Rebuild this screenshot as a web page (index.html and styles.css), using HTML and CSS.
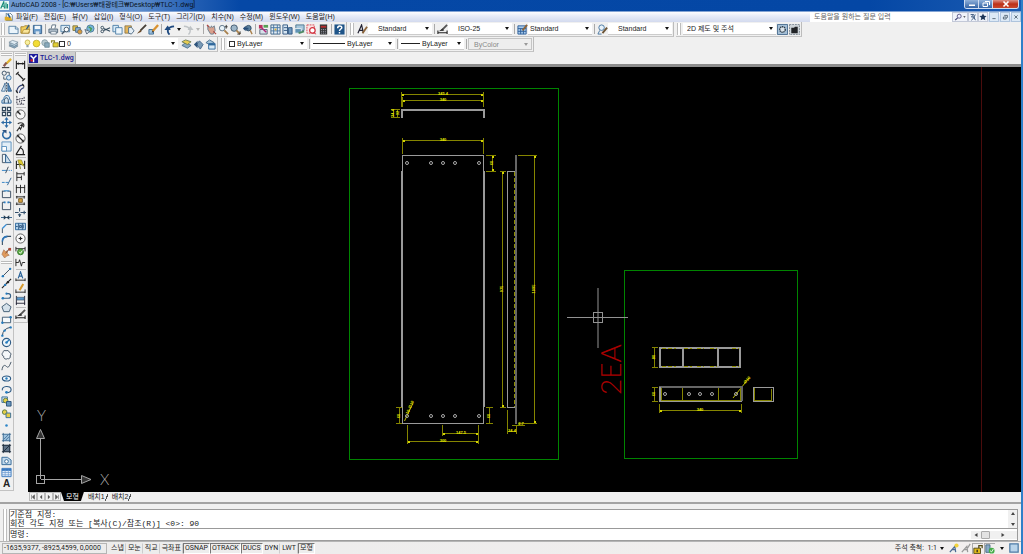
FILE: index.html
```html
<!DOCTYPE html>
<html lang="ko">
<head>
<meta charset="utf-8">
<title>AutoCAD 2008 - TLC-1.dwg</title>
<link rel="stylesheet" href="styles.css">
</head>
<body>
<svg class="defs" aria-hidden="true">
<symbol id="new" viewBox="0 0 12 12"><path d="M1 2.500h7.500l2.500 2.500v5.500h-10z" fill="#eaf4fb" stroke="#5580a4"/><path d="M8 2.500v3h3" fill="none" stroke="#5580a4"/></symbol>
<symbol id="open" viewBox="0 0 12 12"><path d="M1 3h3l1-1h5v8H1z" fill="#f2cf5c" stroke="#a08030"/><path d="M5 9l5-8" stroke="#345f86" stroke-width="1.500"/><path d="M2 10l2-4h7l-2 4z" fill="#f9e59a" stroke="#a08030" stroke-width=".7"/></symbol>
<symbol id="save" viewBox="0 0 12 12"><path d="M1.500 1.500h9v9h-9z" fill="#6a9bca" stroke="#37618c"/><path d="M3 2h6v3.500H3z" fill="#f2f7fb"/><path d="M4 8h4v3H4z" fill="#d8e4ee"/></symbol>
<symbol id="print" viewBox="0 0 12 12"><path d="M3.500 5l1-4h4l-1 4" fill="#fff" stroke="#5c6f80"/><path d="M1 5.500h9.500v4H1z" fill="#b4c2ce" stroke="#526678"/><path d="M3 8h6v3H3z" fill="#e9eef2" stroke="#526678" stroke-width=".7"/></symbol>
<symbol id="preview" viewBox="0 0 12 12"><path d="M1 1.500h9.500v7H1z" fill="#dcebf5" stroke="#4e7da5"/><circle cx="7" cy="6" r="2.500" fill="#fff" stroke="#456" /><path d="M5 8l-3 3" stroke="#456" stroke-width="1.500"/></symbol>
<symbol id="publish" viewBox="0 0 12 12"><path d="M1 2h5v5H1z" fill="#e5c04d" stroke="#7c7440"/><path d="M4 4h5v5H4z" fill="#8fb6d6" stroke="#3e658c"/><circle cx="8.500" cy="8.500" r="2.500" fill="#d89b3c" stroke="#506070" stroke-width=".7"/></symbol>
<symbol id="dwf" viewBox="0 0 12 12"><circle cx="7" cy="5" r="4" fill="#77b6d8" stroke="#3d6b8c" stroke-width=".8"/><path d="M5 3l3 2-1 3" stroke="#4a9a50" stroke-width="1.500" fill="none"/><path d="M1 6l5 2-3 3z" fill="#d9e4ec" stroke="#567"/></symbol>
<symbol id="cut" viewBox="0 0 12 12"><path d="M11 4L4 7M11 8L4 5" stroke="#334a5c" stroke-width="1.200"/><circle cx="2.500" cy="4" r="1.500" fill="none" stroke="#334a5c"/><circle cx="2.500" cy="8" r="1.500" fill="none" stroke="#334a5c"/></symbol>
<symbol id="copy" viewBox="0 0 12 12"><path d="M1 1.500h6v7H1z" fill="#d9ebf7" stroke="#4f80a8"/><path d="M4 4h7v7H4z" fill="#edf6fc" stroke="#4f80a8"/></symbol>
<symbol id="paste" viewBox="0 0 12 12"><path d="M1 2h7v8H1z" fill="#e3b55b" stroke="#7e6a3c" stroke-width=".8"/><path d="M5 4l3-.5 3 4-3 3.500-3-1z" fill="#e5eef5" stroke="#52708a"/></symbol>
<symbol id="match" viewBox="0 0 12 12"><path d="M11 1L5 7" stroke="#474039" stroke-width="2"/><path d="M5 6L1 10.500l5-2z" fill="#6b4d2d"/></symbol>
<symbol id="bedit" viewBox="0 0 12 12"><path d="M1 6h5v5H1z" fill="#9cc1de" stroke="#3e6b94"/><path d="M11 1L5 8" stroke="#d89130" stroke-width="2.500"/><path d="M5 7l-1 2.500 2.500-1z" fill="#333"/></symbol>
<symbol id="undo" viewBox="0 0 12 12"><path d="M6 11.500C2.500 8 4 3 11 2.500" fill="none" stroke="#1f4a80" stroke-width="2"/><path d="M.5 6.500L4 1.500l3.500 5z" fill="#1f4a80"/></symbol>
<symbol id="redo" viewBox="0 0 12 12"><path d="M6 11.500C9.500 8 8 3 1 2.500" fill="none" stroke="#bfc3c6" stroke-width="1.500"/><path d="M11.500 6.500L8 2 5 6.500z" fill="#bfc3c6"/></symbol>
<symbol id="pan" viewBox="0 0 12 12"><path d="M2 2l3 2 1-2 1 2 2-2 1 5-2 4H5L2 6z" fill="#d8a08c" stroke="#6c7f8e"/><path d="M8 8l3 3M1 1l2 2" stroke="#b4433c" stroke-width="1.200"/></symbol>
<symbol id="zoom" viewBox="0 0 12 12"><circle cx="4.500" cy="4.500" r="3" fill="#e8f2f8" stroke="#5b7286"/><path d="M7 7l4 4" stroke="#a8804c" stroke-width="2"/><path d="M9 1v4M7.500 3h3" stroke="#333"/></symbol>
<symbol id="zoomw" viewBox="0 0 12 12"><circle cx="4.500" cy="4.500" r="3.500" fill="#9db6c8" stroke="#41586c"/><path d="M7 7l4 4" stroke="#a8804c" stroke-width="2"/><path d="M8 11h3V8" stroke="#333" fill="none"/></symbol>
<symbol id="zoomp" viewBox="0 0 12 12"><circle cx="7" cy="4.500" r="3" fill="#5d82a0" stroke="#2f4c66"/><path d="M9 7l2 4" stroke="#a8804c" stroke-width="1.500"/><path d="M1 5l3-3v2h3v2H4v2z" fill="#274d78"/></symbol>
<symbol id="props" viewBox="0 0 12 12"><path d="M1 1h4v4H1z" fill="#b8345e"/><path d="M6 1h5v3H6z" fill="#56a055"/><path d="M2 6h8v5H2z" fill="#d7e1ea" stroke="#567"/><path d="M4 4l5 5" stroke="#b02878" stroke-width="1.600"/></symbol>
<symbol id="dc" viewBox="0 0 12 12"><path d="M1 1h10v10H1z" fill="#e4edf5" stroke="#3d6082"/><path d="M1 4h10M1 7.500h10M4 1v10M8 1v10" stroke="#4775a0"/><path d="M5 5h2v2H5z" fill="#d2ac3b"/></symbol>
<symbol id="tp" viewBox="0 0 12 12"><path d="M1 1h5v10H1z" fill="#d7e6f2" stroke="#2f5580"/><path d="M2 4h4M2 7h4" stroke="#2f5580"/><path d="M7 4h4v7H7z" fill="#6d98bf" stroke="#2f5580"/></symbol>
<symbol id="sheet" viewBox="0 0 12 12"><path d="M2 1h9v6H2z" fill="#a9c8dc" stroke="#4d7792"/><path d="M1 5h7v5H1z" fill="#5f93b3" stroke="#e7eef3"/><path d="M5 10l6-2" stroke="#4f8a63" stroke-width="2"/></symbol>
<symbol id="markup" viewBox="0 0 12 12"><path d="M1 1h8v9H1z" fill="#fbe4e4" stroke="#d64550" stroke-dasharray="2 1"/><circle cx="7" cy="7" r="3" fill="#fff" stroke="#d22f3c" stroke-width="1.300"/><path d="M9 10l2 1" stroke="#d22f3c"/></symbol>
<symbol id="calc" viewBox="0 0 12 12"><path d="M2 .5h8v11H2z" fill="#363839"/><path d="M3 2h6v2H3z" fill="#b62a2d"/><path d="M3.500 6h5M3.500 8h5M3.500 10h5" stroke="#aab" stroke-dasharray="1 1"/></symbol>
<symbol id="help" viewBox="0 0 12 12"><path d="M.5.500h11v11H.5z" fill="#1e5488"/><path d="M4 4.500c0-3 4.500-3 4.500-.5C8.500 5.500 6 5.500 6 7.500M6 8.800v1.500" fill="none" stroke="#fff" stroke-width="1.600"/></symbol>
<symbol id="tstyle" viewBox="0 0 12 12"><path d="M1 10L5 1l2 9M2 7h5" fill="none" stroke="#223" stroke-width="1.300"/><path d="M11 3L6 10" stroke="#8c643a" stroke-width="2"/></symbol>
<symbol id="dstyle" viewBox="0 0 12 12"><path d="M1 7v4M11 7v4M1 9.500h10" stroke="#222" stroke-width="1.200"/><path d="M11 1L5 7" stroke="#555" stroke-width="2"/><path d="M6 5l-4 3 6-1z" fill="#333"/></symbol>
<symbol id="tblstyle" viewBox="0 0 12 12"><path d="M1 2h9v9H1z" fill="#a6c9ea" stroke="#2d5e9a"/><path d="M1 5h9M1 8h9M4 5v6M7 5v6" stroke="#2d5e9a"/><path d="M11 1L6 7" stroke="#8c643a" stroke-width="2"/></symbol>
<symbol id="mstyle" viewBox="0 0 12 12"><circle cx="5" cy="4" r="3" fill="#e8f2fa" stroke="#4474a0"/><path d="M3 7l-2 4h4" fill="none" stroke="#4474a0"/><path d="M11 4L6 10" stroke="#6b5334" stroke-width="2"/></symbol>
<symbol id="gear" viewBox="0 0 12 12"><path d="M.5.500h11v11H.5z" fill="#a4bfd6" stroke="#456a8c"/><circle cx="6" cy="6" r="3" fill="#dbe4ea" stroke="#2c3a48" stroke-width="1.500" stroke-dasharray="1.500 .7"/></symbol>
<symbol id="wsq" viewBox="0 0 12 12"><path d="M.5.500h11v11H.5z" fill="#ccd3d8" stroke="#7b8790" stroke-dasharray="2 1"/><path d="M2.500 4h3l1-1h3v7h-7z" fill="#202326"/></symbol>
<symbol id="layers" viewBox="0 0 12 12"><path d="M1 7.500l4-2 6 2-4 2.500z" fill="#8ca9be" stroke="#557085" stroke-width=".6"/><path d="M1 5.500l4-2 6 2-4 2.500z" fill="#bad0df" stroke="#557085" stroke-width=".6"/><path d="M1 3.500l4-2 6 2-4 2.500z" fill="#dfebf3" stroke="#557085" stroke-width=".6"/></symbol>
<symbol id="bulb" viewBox="0 0 12 12"><circle cx="6" cy="4.500" r="3.200" fill="#f8f0a0" stroke="#c3a93a"/><path d="M4.500 8h3v3h-3z" fill="#8ea0ac"/></symbol>
<symbol id="sun" viewBox="0 0 12 12"><circle cx="6" cy="6" r="4.500" fill="#f2dd35" stroke="#bda827"/></symbol>
<symbol id="vp" viewBox="0 0 12 12"><circle cx="5" cy="5" r="4" fill="#b9cad0" stroke="#7b949e"/><path d="M5 5h6v6H5z" fill="#8aabbd" stroke="#60808f"/></symbol>
<symbol id="lock" viewBox="0 0 12 12"><path d="M2 5V2.500h4V5" fill="none" stroke="#918928" stroke-width="1.500"/><path d="M4 5h7v5.500H4z" fill="#e4cf33" stroke="#827822"/></symbol>
<symbol id="lcur" viewBox="0 0 12 12"><path d="M1 7l4-3 6 3-4 3z" fill="#87a8c1" stroke="#4a708e"/><path d="M1 3l4-2 6 2-4 3z" fill="#e7cc52" stroke="#718058"/></symbol>
<symbol id="lprev" viewBox="0 0 12 12"><path d="M4 6l3-4 4 4-3 5z" fill="#7899b5" stroke="#45678a"/><path d="M1 6l4-4v8z" fill="#2d537c"/></symbol>
<symbol id="lstate" viewBox="0 0 12 12"><path d="M1 4l4-3 5 3-5 2z" fill="#9fc0d8" stroke="#4a708e"/><path d="M4 5h7v6H4z" fill="#d7e9f6" stroke="#2f689c"/><path d="M4 6h7" stroke="#2f689c" stroke-width="2"/></symbol>
<symbol id="erase" viewBox="0 0 12 12"><path d="M11 1L6 6" stroke="#e0b434" stroke-width="2.500"/><path d="M6 5L3 9" stroke="#8a5a50" stroke-width="2.500"/><path d="M1 10.500h8" stroke="#222"/></symbol>
<symbol id="cobj" viewBox="0 0 12 12"><circle cx="3.500" cy="3.500" r="2.300" fill="none" stroke="#344b62"/><circle cx="8.500" cy="8.500" r="2.500" fill="#d3e5f3" stroke="#2e6ca3"/><path d="M6 2.500h3v3M3 7v3h3" fill="none" stroke="#456"/></symbol>
<symbol id="mirror" viewBox="0 0 12 12"><path d="M4.500 1v9H.5z" fill="#dcebf5" stroke="#477096"/><path d="M7.500 1v9h4z" fill="#5b8dbb" stroke="#2f5f8c"/><path d="M6 0v12" stroke="#456" stroke-dasharray="2 1"/></symbol>
<symbol id="offset" viewBox="0 0 12 12"><path d="M1 10V7l2-1C3 0 10 0 9.500 6l1.500 1v3z" fill="#d6e6f2" stroke="#2d689e"/><path d="M3.500 10V7.500C4 3 8 3 8 7.500V10" fill="none" stroke="#223b55"/></symbol>
<symbol id="array" viewBox="0 0 12 12"><path d="M1.500 1.500h3.500v3.500H1.500zM7 1.500h3.500v3.500H7zM1.500 7h3.500v3.500H1.500zM7 7h3.500v3.500H7z" fill="#e7edf2" stroke="#32475a" stroke-width="1.200"/></symbol>
<symbol id="move" viewBox="0 0 12 12"><path d="M6 1v10M1 6h10" stroke="#2d6ba5" stroke-width="1.300"/><path d="M6 0l2.200 3H3.800zM6 12l2.200-3H3.800zM0 6l3-2.200v4.400zM12 6L9 3.800v4.400z" fill="#2d6ba5"/></symbol>
<symbol id="rotate" viewBox="0 0 12 12"><path d="M4 2.500A4.300 4.300 0 1 0 9 3" fill="none" stroke="#2d6ba5" stroke-width="1.700"/><path d="M1 1h5v4z" fill="#2d5280"/></symbol>
<symbol id="scale" viewBox="0 0 12 12"><path d="M1 1h10v10H1z" fill="#e2eef7" stroke="#5a8fbd"/><path d="M1 6h5v5H1z" fill="#fff" stroke="#5a8fbd"/></symbol>
<symbol id="stretch" viewBox="0 0 12 12"><path d="M1.500 1.500H5v9H1.500z" fill="#edf3f7" stroke="#456"/><path d="M5 1.500l6 9H5z" fill="#cfe0ee" stroke="#2d5e8c"/></symbol>
<symbol id="trim" viewBox="0 0 12 12"><path d="M1 7h5" stroke="#2d7fc4"/><path d="M7 7h5" stroke="#2d7fc4" stroke-dasharray="1 1"/><path d="M8 3L5 10" stroke="#345"/></symbol>
<symbol id="extend" viewBox="0 0 12 12"><path d="M1 7h3M5 7h3" stroke="#2d7fc4"/><path d="M11 2L7 10" stroke="#2d5f8f"/></symbol>
<symbol id="breakp" viewBox="0 0 12 12"><path d="M1.500 3.500H5M7 3.500h3.500v7h-9V3" fill="none" stroke="#33475c"/><path d="M3 3h6" stroke="#5d9dce" stroke-width="1.500"/></symbol>
<symbol id="break" viewBox="0 0 12 12"><path d="M4 2.500H1.500v8h9v-8H8" fill="none" stroke="#33475c"/><path d="M3 2.500h2M7 2.500h2" stroke="#2d7fc4" stroke-width="2"/></symbol>
<symbol id="join" viewBox="0 0 12 12"><path d="M0 6h12" stroke="#2e5d88"/><path d="M3 3.500L6 6 3 8.500zM9 3.500L6 6l3 2.500z" fill="#253c52"/></symbol>
<symbol id="chamfer" viewBox="0 0 12 12"><path d="M1.500 11V6l4.500-4.500h5" fill="none" stroke="#3b5064"/><path d="M1.500 6L6 1.500" stroke="#3c93da" stroke-width="1.500"/></symbol>
<symbol id="fillet" viewBox="0 0 12 12"><path d="M1.500 11V7Q1.500 2 7 1.500h4" fill="none" stroke="#3b5064" stroke-width="1.200"/><path d="M1.500 7Q1.500 2 7 1.500" fill="none" stroke="#2d75b7" stroke-width="1.700"/></symbol>
<symbol id="explode" viewBox="0 0 12 12"><path d="M1 8l2-5 2 2 2-1v3l2 2-3 1-2 2z" fill="#e09a5c" stroke="#9a6a50" stroke-width=".6"/><path d="M8 1h3v3H8z" fill="#b54a3a"/><path d="M5 7l4-5" stroke="#7a4a34"/></symbol>
<symbol id="line" viewBox="0 0 12 12"><path d="M2 10l8-8" stroke="#345"/><circle cx="2" cy="10" r="1.300" fill="#257bbd"/><circle cx="10" cy="2" r="1.300" fill="#257bbd"/></symbol>
<symbol id="xline" viewBox="0 0 12 12"><path d="M1 11L11 1" stroke="#222" stroke-width="1.200"/><circle cx="4.500" cy="7.500" r="1.300" fill="#257bbd"/><circle cx="7.500" cy="4.500" r="1.300" fill="#222"/></symbol>
<symbol id="pline" viewBox="0 0 12 12"><path d="M1 9h7a2.500 2.500 0 0 0 0-5H6" fill="none" stroke="#345f85" stroke-width="1.200"/><circle cx="2" cy="9" r="1.400" fill="#257bbd"/><circle cx="6" cy="4" r="1.200" fill="#257bbd"/></symbol>
<symbol id="polygon" viewBox="0 0 12 12"><path d="M6 1.500l5 3.700-2 5.300H3L1 5.200z" fill="#d4e1ea" stroke="#3b5870"/></symbol>
<symbol id="rect" viewBox="0 0 12 12"><path d="M1.500 3.500h9v6h-9z" fill="#f5f9fc" stroke="#3b5870"/><circle cx="1.500" cy="9.500" r="1.300" fill="#257bbd"/><circle cx="10.500" cy="3.500" r="1.300" fill="#257bbd"/></symbol>
<symbol id="arc" viewBox="0 0 12 12"><path d="M1.500 10.500Q2 3 10 1.500" fill="none" stroke="#345"/><circle cx="1.500" cy="10.500" r="1.300" fill="#257bbd"/><circle cx="4" cy="5" r="1.300" fill="#257bbd"/><circle cx="10.500" cy="1.500" r="1.300" fill="#257bbd"/></symbol>
<symbol id="circle" viewBox="0 0 12 12"><circle cx="6" cy="6" r="4.500" fill="#edf5fa" stroke="#2e5b85" stroke-width="1.200"/><path d="M6 6l3-3" stroke="#257bbd" stroke-width="1.300"/><circle cx="6" cy="6" r="1.400" fill="#257bbd"/></symbol>
<symbol id="cloud" viewBox="0 0 12 12"><path d="M3 8a2.300 2.300 0 0 1-1-4 2.300 2.300 0 0 1 3.500-2 2.300 2.300 0 0 1 3.500 1.500 2.300 2.300 0 0 1 1 4 2.300 2.300 0 0 1-3 3A2.500 2.500 0 0 1 3 8z" fill="#f5f8fa" stroke="#3c4f60"/></symbol>
<symbol id="spline" viewBox="0 0 12 12"><path d="M1 10c1-6 3-6 5-4s3 0 5-5" fill="none" stroke="#3c4f60"/></symbol>
<symbol id="ellipse" viewBox="0 0 12 12"><ellipse cx="6" cy="6" rx="4.500" ry="2.800" fill="#edf5fa" stroke="#2e5b85" stroke-width="1.200"/><circle cx="6" cy="6" r="1.300" fill="#257bbd"/></symbol>
<symbol id="earc" viewBox="0 0 12 12"><path d="M1.500 7C0 2 11 1 11 6c0 2-2 3.500-5 3.500" fill="none" stroke="#2e5b85" stroke-width="1.200"/><circle cx="6" cy="9" r="1.500" fill="#257bbd"/></symbol>
<symbol id="insert" viewBox="0 0 12 12"><path d="M1 1h6v6H1z" fill="#cfe0ec" stroke="#356b98"/><circle cx="5" cy="5" r="2.500" fill="#e5cf47" stroke="#5f7a44"/><path d="M6 6h5v5H6z" fill="#6695bd" stroke="#284f74"/></symbol>
<symbol id="block" viewBox="0 0 12 12"><circle cx="4" cy="4.500" r="2.500" fill="#e5cf47" stroke="#557a44"/><path d="M5.500 5.500h5v5h-5z" fill="#e5cf47" stroke="#356b98"/></symbol>
<symbol id="point" viewBox="0 0 12 12"><circle cx="6" cy="6" r="1.400" fill="#2d86c9"/></symbol>
<symbol id="hatch" viewBox="0 0 12 12"><path d="M2 2h8v8H2z" fill="#9fc4e0"/><path d="M1 2.500h10M1 9.500h10M2.500 1v10M9.500 1v10M3 8l5-5M5 9l4-4" stroke="#315f88" stroke-width=".8"/></symbol>
<symbol id="gradient" viewBox="0 0 12 12"><path d="M2 2h8v8H2z" fill="#5e7287"/><path d="M1 2.500h10M1 9.500h10M2.500 1v10M9.500 1v10M3 9l6-6" stroke="#1f2d3b"/></symbol>
<symbol id="region" viewBox="0 0 12 12"><path d="M1 2.500h6l4 3v5H1z" fill="#c1d9ec" stroke="#316796"/><circle cx="6" cy="7" r="2" fill="#fff" stroke="#316796"/></symbol>
<symbol id="table" viewBox="0 0 12 12"><path d="M1 1.500h10v9H1z" fill="#e3eefa" stroke="#3978c0"/><path d="M1 3h10" stroke="#3978c0" stroke-width="2.500"/><path d="M1 6h10M1 8.500h10M4.500 3v7M8 3v7" stroke="#6e9cd0" stroke-width=".8"/></symbol>
<symbol id="dlin" viewBox="0 0 12 12"><path d="M1.500 2v9M10.500 2v9M2 5h8" stroke="#222" stroke-width="1.200"/><path d="M2 5l2-1.500v3zM10 5L8 3.500v3z" fill="#222"/></symbol>
<symbol id="dali" viewBox="0 0 12 12"><path d="M1 4l3-3M8 11l3-3M3 3l6 6" stroke="#222" stroke-width="1.300"/></symbol>
<symbol id="darc" viewBox="0 0 12 12"><path d="M2 10Q2 3 9 2M5 11Q5 7 10 5" fill="none" stroke="#347" stroke-width="1.200"/><path d="M1 8l2 3M8 1l2 3" stroke="#222" stroke-width="1.300"/></symbol>
<symbol id="dord" viewBox="0 0 12 12"><path d="M2 1v9h9M5 8V4h5V1M2 5h3M7 10V6h4" fill="none" stroke="#334" stroke-dasharray="2 1"/></symbol>
<symbol id="drad" viewBox="0 0 12 12"><circle cx="6" cy="6" r="5" fill="#f8f8f8" stroke="#555"/><path d="M6 6L3 3" stroke="#222" stroke-width="1.300"/><path d="M2 2l3 1-2 2z" fill="#222"/></symbol>
<symbol id="djog" viewBox="0 0 12 12"><path d="M3 3c5-3 8 1 6 4M2 11l3-4 1 2 3-6" fill="none" stroke="#333" stroke-width="1.200"/><path d="M5 5l3-2v3z" fill="#222"/></symbol>
<symbol id="ddia" viewBox="0 0 12 12"><circle cx="6" cy="6" r="5" fill="#f8f8f8" stroke="#555"/><path d="M3 3l6 6" stroke="#222" stroke-width="1.200"/><path d="M2 2l3 1-2 2zM10 10l-3-1 2-2z" fill="#222"/></symbol>
<symbol id="dang" viewBox="0 0 12 12"><path d="M1 10.500h10M1 10.500L7 1M6 3q4 2 3 7" fill="none" stroke="#222" stroke-width="1.200"/></symbol>
<symbol id="qdim" viewBox="0 0 12 12"><path d="M1.500 2v9M10.500 2v9M2 6h8" stroke="#222" stroke-width="1.200"/><path d="M3 1h4l3 7-5-3 1 6z" fill="#dfca2f" stroke="#777126" stroke-width=".6"/></symbol>
<symbol id="dbase" viewBox="0 0 12 12"><path d="M2 1v10M2 3h8M10 1v4M2 7h5M7 5v5" fill="none" stroke="#222"/></symbol>
<symbol id="dcont" viewBox="0 0 12 12"><path d="M1.500 2v9M6 2v9M10.500 2v9M1 5h10" stroke="#222"/></symbol>
<symbol id="dspace" viewBox="0 0 12 12"><path d="M1 2h10M1 10h10M2 1v3M10 1v3M2 8v3M10 8v3" stroke="#222"/><path d="M4 4h4v4H4z" fill="#dca43d" stroke="#775c2a"/></symbol>
<symbol id="dbreak" viewBox="0 0 12 12"><path d="M5 1v4M5 7v4M0 6h4M6 6h6M10 4v4" stroke="#334f6b" stroke-width="1.200"/><path d="M3 8h4l-2 3z" fill="#334f6b"/></symbol>
<symbol id="tol" viewBox="0 0 12 12"><path d="M.5 2.500h11v7H.5z" fill="#afd0ea" stroke="#2c679b"/><path d="M4 2.500v7M8 2.500v7M1 6h2M5 5h2v2H5zM9 4v4" fill="none" stroke="#2c5580"/></symbol>
<symbol id="center" viewBox="0 0 12 12"><circle cx="6" cy="6" r="5" fill="#fafafa" stroke="#555"/><path d="M6 4v4M4 6h4" stroke="#222" stroke-width="1.300"/></symbol>
<symbol id="insp" viewBox="0 0 12 12"><path d="M1 2v5M11 2v5M1 4h10" stroke="#222"/><circle cx="6" cy="7.500" r="3.200" fill="#61ae46" stroke="#2f752a"/><path d="M4.500 7.500L6 9l2-3" fill="none" stroke="#fff"/></symbol>
<symbol id="jogl" viewBox="0 0 12 12"><path d="M1 2v8M1 6h3l1-3 2 7 1-4h3" fill="none" stroke="#222"/></symbol>
<symbol id="dedit" viewBox="0 0 12 12"><path d="M1 8v3M11 8v3M1 10h10" stroke="#222"/><path d="M3.500 8L6 1l2.500 7M4.500 5.500h3" fill="none" stroke="#2c6499" stroke-width="1.300"/></symbol>
<symbol id="dtedit" viewBox="0 0 12 12"><path d="M1 7v4M11 7v4M1 10h10" stroke="#222"/><path d="M9 1L5 8" stroke="#d89b30" stroke-width="2.200"/></symbol>
<symbol id="dupd" viewBox="0 0 12 12"><path d="M1.500 1v10M10.500 1v10M1 9h10" stroke="#223"/><path d="M2 2.500h8v3H2z" fill="#5b9bd0" stroke="#345" stroke-width=".6"/></symbol>
</svg>

<header class="titlebar">
  <svg class="app" viewBox="0 0 12 12" aria-hidden="true"><path d="M0 0h12v12H0z" fill="#e9f7f3"/><path d="M1 10L5 1l1 9M2 7h4M8 2v8M10 4v6" fill="none" stroke="#178b78" stroke-width="1.500"/></svg>
  <h1>AutoCAD 2008 - [C:₩Users₩태광테크₩Desktop₩TLC-1.dwg]</h1>
  <div class="caption">
    <button aria-label="최소화"><svg viewBox="0 0 12 8"><path d="M3 4.500h6v1.500H3z" fill="#fff"/></svg></button>
    <button aria-label="이전 크기로"><svg viewBox="0 0 12 8"><path d="M5 1.500h4.500v3.500M3 3h4.500v3.500H3z" fill="none" stroke="#fff"/></svg></button>
    <button class="close" aria-label="닫기"><svg viewBox="0 0 12 8"><path d="M3.500 1.500l5 5M8.500 1.500l-5 5" stroke="#fff" stroke-width="1.600"/></svg></button>
  </div>
</header>

<nav class="menubar">
  <svg class="doc" viewBox="0 0 12 12" aria-hidden="true"><path d="M3 0h5l3 3v7H3z" fill="#fff" stroke="#467"/><path d="M1 5h8l2 5H1z" fill="#e0ac26"/><path d="M5 1l3 5" stroke="#2a62a0" stroke-width="2"/></svg>
  <div class="menus"><button>파일(F)</button><button>편집(E)</button><button>뷰(V)</button><button>삽입(I)</button><button>형식(O)</button><button>도구(T)</button><button>그리기(D)</button><button>치수(N)</button><button>수정(M)</button><button>윈도우(W)</button><button>도움말(H)</button></div>
  <div class="infocenter">
    <input type="text" aria-label="도움말 검색" placeholder="도움말을 원하는 질문 입력">
    <button class="wide" aria-label="검색"><svg viewBox="0 0 16 10"><circle cx="7" cy="4" r="2.500" fill="#eef" stroke="#447"/><path d="M5 6L2 9" stroke="#447" stroke-width="1.500"/><path d="M12 4h3l-1.500 2z" fill="#333"/></svg></button>
    <button aria-label="통신 센터"><svg viewBox="0 0 10 10"><path d="M2 2h4L3 5h4L3 9M8 2L6 5l2 4" fill="none" stroke="#335078" stroke-width="1.200"/></svg></button>
    <button aria-label="즐겨찾기"><svg viewBox="0 0 10 10"><path d="M5 .500l1.400 3 3.100.3-2.400 2 .8 3.200L5 7.400 2.100 9l.8-3.200-2.400-2 3.100-.3z" fill="#1d3558"/></svg></button>
    <button class="mdi" aria-label="도면 최소화"><svg viewBox="0 0 10 10"><path d="M3 7h4" stroke="#456" /></svg></button>
    <button class="mdi" aria-label="도면 복원"><svg viewBox="0 0 10 10"><path d="M4 3h4v3M3 5h3.500v2.500H3z" fill="none" stroke="#456"/></svg></button>
    <button class="mdi" aria-label="도면 닫기"><svg viewBox="0 0 10 10"><path d="M3 3l4 4M7 3L3 7" stroke="#456"/></svg></button>
  </div>
</nav>

<div class="toolrow">
  <div class="bar" role="toolbar" aria-label="표준">
    <i class="grip"></i>
    <button aria-label="새로 만들기"><svg><use href="#new"/></svg></button><button aria-label="열기"><svg><use href="#open"/></svg></button><button aria-label="저장"><svg><use href="#save"/></svg></button><i class="sep"></i>
    <button aria-label="플롯"><svg><use href="#print"/></svg></button><button aria-label="미리보기"><svg><use href="#preview"/></svg></button><button aria-label="게시"><svg><use href="#publish"/></svg></button><button aria-label="3D DWF"><svg><use href="#dwf"/></svg></button><i class="sep"></i>
    <button aria-label="잘라내기"><svg><use href="#cut"/></svg></button><button aria-label="복사"><svg><use href="#copy"/></svg></button><button aria-label="붙여넣기"><svg><use href="#paste"/></svg></button><button aria-label="특성 일치"><svg><use href="#match"/></svg></button><button aria-label="블록 편집기"><svg><use href="#bedit"/></svg></button><i class="sep"></i>
    <button aria-label="명령 취소"><svg><use href="#undo"/></svg></button><button class="drop" aria-label="취소 목록"></button><button aria-label="명령 복구"><svg><use href="#redo"/></svg></button><button class="drop off" aria-label="복구 목록"></button><i class="sep"></i>
    <button aria-label="초점이동"><svg><use href="#pan"/></svg></button><button aria-label="줌"><svg><use href="#zoom"/></svg></button><button aria-label="줌 윈도우"><svg><use href="#zoomw"/></svg></button><button aria-label="줌 이전"><svg><use href="#zoomp"/></svg></button><i class="sep"></i>
    <button aria-label="특성"><svg><use href="#props"/></svg></button><button aria-label="디자인센터"><svg><use href="#dc"/></svg></button><button aria-label="도구 팔레트"><svg><use href="#tp"/></svg></button><button aria-label="시트 세트"><svg><use href="#sheet"/></svg></button><button aria-label="표식 세트"><svg><use href="#markup"/></svg></button><button aria-label="계산기"><svg><use href="#calc"/></svg></button><i class="sep"></i>
    <button aria-label="도움말"><svg><use href="#help"/></svg></button>
  </div>
  <div class="bar" role="toolbar" aria-label="스타일">
    <i class="grip"></i>
    <button aria-label="문자 스타일"><svg><use href="#tstyle"/></svg></button><span class="combo style in"><select aria-label="문자 스타일 목록"><option>Standard</option></select></span><i class="sep"></i>
    <button aria-label="치수 스타일"><svg><use href="#dstyle"/></svg></button><span class="combo style in"><select aria-label="치수 스타일 목록"><option>ISO-25</option></select></span><i class="sep"></i>
    <button aria-label="테이블 스타일"><svg><use href="#tblstyle"/></svg></button><span class="combo style"><select aria-label="테이블 스타일 목록"><option>Standard</option></select></span><i class="sep"></i>
    <button aria-label="다중 지시선 스타일"><svg><use href="#mstyle"/></svg></button><span class="combo style in"><select aria-label="지시선 스타일 목록"><option>Standard</option></select></span>
  </div>
  <div class="bar" role="toolbar" aria-label="작업공간">
    <i class="grip"></i>
    <span class="combo space"><select aria-label="작업공간 목록"><option>2D 제도 및 주석</option></select></span>
    <button aria-label="작업공간 설정"><svg><use href="#gear"/></svg></button><button aria-label="내 작업공간"><svg><use href="#wsq"/></svg></button>
  </div>
</div>
<div class="toolrow">
  <div class="bar" role="toolbar" aria-label="도면층">
    <i class="grip"></i>
    <button aria-label="도면층 특성"><svg><use href="#layers"/></svg></button>
    <span class="combo layer"><span class="flags"><svg><use href="#bulb"/></svg><svg><use href="#sun"/></svg><svg><use href="#vp"/></svg><svg><use href="#lock"/></svg><i class="swatch"></i></span><select aria-label="도면층 목록"><option>0</option></select></span>
    <button aria-label="현재로 설정"><svg><use href="#lcur"/></svg></button><button aria-label="이전 도면층"><svg><use href="#lprev"/></svg></button><button aria-label="도면층 상태"><svg><use href="#lstate"/></svg></button>
  </div>
  <div class="bar" role="toolbar" aria-label="특성">
    <i class="grip"></i>
    <span class="combo color"><span class="flags"><i class="swatch"></i></span><select aria-label="색상"><option>ByLayer</option></select></span><i class="sep"></i>
    <span class="combo ltype"><span class="flags"><i class="rule long"></i></span><select aria-label="선종류"><option>ByLayer</option></select></span><i class="sep"></i>
    <span class="combo lweight"><span class="flags"><i class="rule"></i></span><select aria-label="선가중치"><option>ByLayer</option></select></span><i class="sep"></i>
    <span class="combo plot"><select aria-label="플롯 스타일" disabled><option>ByColor</option></select></span>
  </div>
</div>

<main class="work">
  <aside class="tools modify" role="toolbar" aria-label="수정 및 그리기">
    <i class="hgrip"></i>
    <button aria-label="지우기"><svg><use href="#erase"/></svg></button><button aria-label="객체 복사"><svg><use href="#cobj"/></svg></button><button aria-label="대칭"><svg><use href="#mirror"/></svg></button><button aria-label="간격띄우기"><svg><use href="#offset"/></svg></button><button aria-label="배열"><svg><use href="#array"/></svg></button><button aria-label="이동"><svg><use href="#move"/></svg></button><button aria-label="회전"><svg><use href="#rotate"/></svg></button><button aria-label="축척"><svg><use href="#scale"/></svg></button><button aria-label="신축"><svg><use href="#stretch"/></svg></button><button aria-label="자르기"><svg><use href="#trim"/></svg></button><button aria-label="연장"><svg><use href="#extend"/></svg></button><button aria-label="점에서 끊기"><svg><use href="#breakp"/></svg></button><button aria-label="끊기"><svg><use href="#break"/></svg></button><button aria-label="결합"><svg><use href="#join"/></svg></button><button aria-label="모따기"><svg><use href="#chamfer"/></svg></button><button aria-label="모깎기"><svg><use href="#fillet"/></svg></button><button aria-label="분해"><svg><use href="#explode"/></svg></button>
    <i class="hgrip mid"></i>
    <button aria-label="선"><svg><use href="#line"/></svg></button><button aria-label="구성선"><svg><use href="#xline"/></svg></button><button aria-label="폴리선"><svg><use href="#pline"/></svg></button><button aria-label="폴리곤"><svg><use href="#polygon"/></svg></button><button aria-label="직사각형"><svg><use href="#rect"/></svg></button><button aria-label="호"><svg><use href="#arc"/></svg></button><button aria-label="원"><svg><use href="#circle"/></svg></button><button aria-label="구름형 수정기호"><svg><use href="#cloud"/></svg></button><button aria-label="스플라인"><svg><use href="#spline"/></svg></button><button aria-label="타원"><svg><use href="#ellipse"/></svg></button><button aria-label="타원형 호"><svg><use href="#earc"/></svg></button><button aria-label="블록 삽입"><svg><use href="#insert"/></svg></button><button aria-label="블록 작성"><svg><use href="#block"/></svg></button><button aria-label="점"><svg><use href="#point"/></svg></button><button aria-label="해치"><svg><use href="#hatch"/></svg></button><button aria-label="그라데이션"><svg><use href="#gradient"/></svg></button><button aria-label="영역"><svg><use href="#region"/></svg></button><button aria-label="테이블"><svg><use href="#table"/></svg></button><button class="mtext" aria-label="여러 줄 문자">A</button>
  </aside>
  <aside class="tools dims" role="toolbar" aria-label="치수">
    <i class="hgrip"></i>
    <button aria-label="선형"><svg><use href="#dlin"/></svg></button><button aria-label="정렬"><svg><use href="#dali"/></svg></button><button aria-label="호 길이"><svg><use href="#darc"/></svg></button><button aria-label="세로좌표"><svg><use href="#dord"/></svg></button><i class="hsep"></i>
    <button aria-label="반지름"><svg><use href="#drad"/></svg></button><button aria-label="꺾기"><svg><use href="#djog"/></svg></button><button aria-label="지름"><svg><use href="#ddia"/></svg></button><button aria-label="각도"><svg><use href="#dang"/></svg></button><i class="hsep"></i>
    <button aria-label="신속 치수"><svg><use href="#qdim"/></svg></button><button aria-label="기준선"><svg><use href="#dbase"/></svg></button><button aria-label="연속"><svg><use href="#dcont"/></svg></button><button aria-label="치수 간격"><svg><use href="#dspace"/></svg></button><button aria-label="치수 끊기"><svg><use href="#dbreak"/></svg></button><i class="hsep"></i>
    <button aria-label="공차"><svg><use href="#tol"/></svg></button><button aria-label="중심 표식"><svg><use href="#center"/></svg></button><button aria-label="검사"><svg><use href="#insp"/></svg></button><button aria-label="꺾어진 선형"><svg><use href="#jogl"/></svg></button><i class="hsep"></i>
    <button aria-label="치수 편집"><svg><use href="#dedit"/></svg></button><button aria-label="치수 문자 편집"><svg><use href="#dtedit"/></svg></button><button aria-label="치수 업데이트"><svg><use href="#dupd"/></svg></button><i class="hsep"></i>
    <button aria-label="치수 스타일 관리"><svg><use href="#dstyle"/></svg></button>
  </aside>
  <section class="document">
    <div class="doctabs"><button><svg viewBox="0 0 12 12" aria-hidden="true"><path d="M0 0h12v12H0z" fill="#1b1b9c"/><path d="M2 2l4 4 4-4M6 6v5" stroke="#fff" stroke-width="2" fill="none"/><path d="M2 7h3v3H2z" fill="#d22"/></svg>TLC-1.dwg</button></div>
    <svg class="canvas" role="img" aria-label="도면">
      <g transform="translate(-28 -67)">
        <path class="limit" d="M981.500 67v500"/>
        <g class="frame"><path d="M349.500 88.500h209v371h-209zM624.500 270.500h173v188h-173z"/></g>
        <g class="dim">
          <path d="M401.500 92v15M483.500 92v15M402 94.500h82M402 100.500h82M402.500 97v10"/>
          <path d="M391 109.500h9M391 117.500h9M393.500 109v9M397.500 109v9"/>
          <path d="M402.500 138v16M483.500 138v16M402 140.500h82"/>
          <path d="M486 155.500h10M486 171.500h10M492.500 155v17"/>
          <path d="M500 171.500h6M500 407.500h6M502.500 171v237"/>
          <path d="M518 155.500h19M518 423.500h19M534.500 155v269"/>
          <path d="M396 407.500h6M396 423.500h6M399.500 407v17M486 407.500h7M486 423.500h7M489.500 407v17"/>
          <path d="M407.500 425v19M478.500 425v19M407 441.500h72M442.500 425v11M442 433.500h37"/>
          <path d="M507.500 410v24M516.500 425v9M507 431.500h10M512 425.500h13"/>
          <path d="M652 347.500h6M652 367.500h6M654.500 347v21M652 387.500h6M652 401.500h6M654.500 387v15M659.500 404v9M741.500 404v9M659 410.500h83"/>
          <path class="soft" d="M404.500 421L413 403M733 398l16-20"/>
        </g>
        <g class="ends"><path d="M402 94.500h2M481 94.500h2M403 100.500h2M481 100.500h2M403 140.500h2M481 140.500h2M408 441.500h2M476 441.500h2M443 433.500h2M476 433.500h2M660 410.500h2M739 410.500h2M492.500 156v2M492.500 169v2M534.500 156v2M534.500 421v2M502.500 172v2M502.500 405v2"/></g>
        <g class="part">
          <path class="thick" d="M401 110h83M402 109v9M484 109v9"/>
          <path d="M402.500 171V155.500h81V171M402.500 407v16.500h81V407"/>
          <path class="thick" d="M402 171v236M484 171v236"/>
          <path d="M516 171.500h-8.500v236h8.500"/>
          <path class="thick dark" d="M516 155v269"/>
        </g>
        <path class="hidden" d="M514.500 172v235"/>
        <g class="part holes">
          <circle cx="407" cy="163" r="1.500"/><circle cx="431" cy="163" r="1.500"/><circle cx="443" cy="163" r="1.500"/><circle cx="455" cy="163" r="1.500"/><circle cx="479" cy="163" r="1.500"/>
          <circle cx="407" cy="416" r="1.500"/><circle cx="431" cy="416" r="1.500"/><circle cx="443" cy="416" r="1.500"/><circle cx="455" cy="416" r="1.500"/><circle cx="479" cy="416" r="1.500"/>
        </g>
        <g class="part">
          <path class="thick" d="M660 348h80v19h-80zM683 348v19M718 348v19"/>
          <path class="thick dark" d="M659 387h83v14"/><path class="thick" d="M660 387v14"/><path d="M659 401.500h83"/>
          <path d="M753.500 387.500h20v14h-20z"/>
        </g>
        <path class="hidden" d="M662 348.500h14M684 348.500h8M697 348.500h7M710 348.500h7M732 348.500h7M662 366.500h14M684 366.500h8M697 366.500h7M710 366.500h7M732 366.500h7"/>
        <path class="dim" d="M661.500 388v12.500h79V388M682.500 388v12M718.500 388v12M754.500 388v12.500h17V389"/>
        <g class="part holes"><circle cx="665" cy="394" r="1.500"/><circle cx="689" cy="394" r="1.500"/><circle cx="700" cy="394" r="1.500"/><circle cx="712" cy="394" r="1.500"/><circle cx="736" cy="394" r="1.500"/></g>
        <g class="value">
          <text x="443" y="95">345.4</text><text x="443" y="101">340</text><text x="443" y="141">340</text><text x="461" y="434">147.5</text><text x="443" y="442">300</text><text x="512" y="432">34.4</text><text x="521" y="425">2.7</text><text x="700" y="411">340</text>
          <text transform="translate(394 113) rotate(-90)">34.4</text><text transform="translate(399 113) rotate(-90)">32</text><text transform="translate(493 163) rotate(-90)">60</text><text transform="translate(503 289) rotate(-90)">975</text><text transform="translate(535 289) rotate(-90)">1095</text><text transform="translate(400 416) rotate(-90)">60</text><text transform="translate(490 416) rotate(-90)">60</text><text transform="translate(655 357) rotate(-90)">80</text><text transform="translate(655 394) rotate(-90)">60</text><text transform="translate(411 408) rotate(-65)">10-∅10</text><text transform="translate(748 381) rotate(-50)">∅10</text>
        </g>
        <text class="qty" transform="translate(621 395) rotate(-90)">2EA</text>
        <path class="cross-v" d="M598 288v60"/><path class="cross-h" d="M567 317.500h61M593.500 312.500h9v10h-9z"/>
        <g class="ucs"><path d="M36.500 475.500h8v8h-8zM40.500 479V438M41 479.500h40"/><path class="tip" d="M40.500 429.500l4 9h-8zM91 479.500l-9.500 4v-8z"/><text x="37" y="421">Y</text><text x="100" y="485">X</text></g>
      </g>
    </svg>
    <div class="layouts">
      <button class="step" aria-label="처음"><svg viewBox="0 0 8 8"><path d="M2 1v6M6 1v6L3 4z" stroke="#555" fill="#555" stroke-width=".7"/></svg></button><button class="step" aria-label="이전"><svg viewBox="0 0 8 8"><path d="M5.500 1v6L2.500 4z" fill="#555"/></svg></button><button class="step" aria-label="다음"><svg viewBox="0 0 8 8"><path d="M2.500 1v6L5.500 4z" fill="#555"/></svg></button><button class="step" aria-label="마지막"><svg viewBox="0 0 8 8"><path d="M6 1v6M2 1v6L5 4z" stroke="#555" fill="#555" stroke-width=".7"/></svg></button>
      <button class="sheet current">모형</button><button class="sheet">배치1</button><button class="sheet">배치2</button>
    </div>
  </section>
</main>

<section class="command">
  <i class="vgrip"></i>
  <div class="console">
    <div class="history"><div class="lines"><p>기준점 지정:</p><p>회전 각도 지정 또는 [복사(C)/참조(R)] &lt;0&gt;: 90</p></div>
      <div class="vscroll"><button aria-label="위로"><svg viewBox="0 0 8 8"><path d="M4 2l2 3H2z" fill="#444"/></svg></button><button aria-label="아래로"><svg viewBox="0 0 8 8"><path d="M4 6L2 3h4z" fill="#444"/></svg></button></div></div>
    <div class="prompt"><label for="cmd">명령:</label><input id="cmd" type="text">
      <div class="hscroll"><button aria-label="왼쪽으로"><svg viewBox="0 0 8 8"><path d="M2.500 4l3-2v4z" fill="#444"/></svg></button><i class="thumb"></i><button aria-label="오른쪽으로"><svg viewBox="0 0 8 8"><path d="M5.500 4l-3-2v4z" fill="#444"/></svg></button></div></div>
  </div>
</section>

<footer class="status">
  <output class="coords">-1635,9377, -8925,4599, 0,0000</output>
  <div class="toggles"><button>스냅</button><button>모눈</button><button>직교</button><button>극좌표</button><button class="on">OSNAP</button><button class="on">OTRACK</button><button class="on">DUCS</button><button>DYN</button><button>LWT</button><button class="on">모형</button></div>
  <div class="tray">
    <button class="anno">주석 축척: &nbsp;1:1 <i class="tri"></i></button>
    <button aria-label="주석 가시성"><svg viewBox="0 0 12 12"><path d="M1 11l6-7 1 7M3 8h5" fill="none" stroke="#4a6a94" stroke-width="1.500"/><circle cx="9" cy="3" r="2.500" fill="#f0d23c"/></svg></button>
    <button aria-label="자동 축척"><svg viewBox="0 0 12 12"><path d="M1 11l6-7 1 7M3 8h5M8 6l3-5" fill="none" stroke="#999" stroke-width="1.500"/></svg></button>
    <button class="on" aria-label="잠금"><svg viewBox="0 0 12 12"><path d="M7 5V2h4v3" fill="none" stroke="#544c16" stroke-width="1.500"/><path d="M1 5h8v6.500H1z" fill="#e0b91c" stroke="#443d12"/><path d="M5 7v3" stroke="#222" stroke-width="1.500"/></svg></button>
    <button class="on" aria-label="표준 검사"><svg viewBox="0 0 12 12"><path d="M1 1h5v9H1z" fill="#87abc7" stroke="#3d617e"/><circle cx="8" cy="8" r="3.500" fill="#46ad48"/><path d="M6 8l2 1.500L10 6" fill="none" stroke="#fff"/></svg></button>
    <button class="drop" aria-label="트레이 메뉴"></button>
    <button aria-label="화면 정리"><svg viewBox="0 0 12 12"><path d="M1 1h10v10H1z" fill="#b9d4ea" stroke="#4c7ba6" stroke-width="1.500"/></svg></button>
  </div>
</footer>
</body>
</html>
```

FILE: styles.css
```css
* { box-sizing: border-box; }

html, body { height: 100%; }

body {
  margin: 0;
  display: flex;
  flex-direction: column;
  overflow: hidden;
  background: #f0f0f0;
  border-right: 2px solid #2f80c8;
  color: #222;
  font: 7px/10px "Liberation Sans", "Noto Sans CJK KR", sans-serif;
}

button, input, select, output { font: inherit; color: inherit; }

button {
  display: flex;
  align-items: center;
  justify-content: center;
  padding: 0;
  border: 0;
  background: none;
  white-space: nowrap;
}

svg { display: block; flex: none; }
i { display: block; flex: none; }
h1, p { margin: 0; font: inherit; }
.defs { position: absolute; width: 0; height: 0; }

/* Title bar */
.titlebar {
  display: flex;
  align-items: center;
  height: 12px;
  flex: none;
  gap: 2px;
  margin-right: -2px;
  background: linear-gradient(90deg, #6f9ad2 0, #5b8bcb 140px, #2560b4 190px, #0548a6 240px, #0447a5 85%, #1c5cb2);
  border-bottom: 1px solid #83a4d4;
  font-family: Roboto, "Noto Sans CJK KR", sans-serif;
}
.titlebar h1 { flex: 1; color: #0b1524; line-height: 11px; white-space: nowrap; }
.app { width: 9px; height: 9px; }
.caption { display: flex; align-self: flex-start; height: 9px; margin-right: 4px; border: 1px solid #cfdcf0; border-top: 0; border-radius: 0 0 3px 3px; overflow: hidden; }
.caption button { width: 14px; background: linear-gradient(#8fb0da, #3564a5); border-right: 1px solid #cfdcf0; }
.caption .close { width: 25px; border: 0; background: linear-gradient(#db9186, #bd3018 50%, #c9482e); }
.caption svg { width: 12px; height: 8px; }

/* Menu bar */
.menubar {
  display: flex;
  align-items: center;
  gap: 3px;
  height: 10px;
  flex: none;
  padding-left: 4px;
  background: linear-gradient(#fdfdff, #e7ecf8 40%, #d3daee);
}
.doc { width: 9px; height: 9px; }
.menus { display: flex; gap: 6px; }
.infocenter { display: flex; height: 10px; margin-left: auto; }
.infocenter input { width: 142px; padding: 0 4px; border: 0; background: #fff; outline: 0; }
.infocenter input::placeholder { color: #666; opacity: 1; }
.infocenter button { width: 10px; border: 1px solid #c3c9d8; background: #f0f3fa; }
.infocenter .wide { width: 16px; }
.infocenter .mdi { background: #dce9f6; border-color: #aec4dd; margin-left: 1px; }
.infocenter svg { height: 8px; width: 8px; }
.infocenter .wide svg { width: 14px; }

/* Toolbars */
.toolrow { display: flex; height: 15px; flex: none; gap: 2px; }
.bar {
  display: flex;
  align-items: center;
  height: 15px;
  padding: 0 1px;
  border-right: 1px solid #bcbcbc;
  border-bottom: 1px solid #c4c4c4;
}
.grip { width: 4px; height: 12px; margin-right: 2px; border: solid #bdbdbd; border-width: 0 1px; background: #fff; }
.sep { width: 4px; height: 10px; background: linear-gradient(90deg, #f0f0f0 2px, #a9a9a9 2px, #a9a9a9 3px, #f0f0f0 3px); }
.bar button { width: 12px; height: 13px; }
.bar button svg { width: 11px; height: 11px; }
.bar .drop { width: 7px; }
.drop::after, .tri, .combo::after {
  content: "";
  border: 2px solid transparent;
  border-top: 3px solid #111;
  border-bottom: 0;
}
.drop.off::after { border-top-color: #b5b5b5; }

.combo { display: flex; align-items: center; height: 12px; padding: 0 3px 0 2px; background: #fff; border: solid #ccc; border-width: 0 0 1px; }
.combo select { flex: 1; min-width: 0; height: 11px; padding: 0; border: 0; outline: 0; background: none; appearance: none; line-height: 11px; }
.combo.style { width: 64px; }
.combo.in { padding-left: 10px; }
.combo.space { width: 93px; padding-left: 4px; }
.combo.layer { width: 157px; margin: 0 2px; }
.combo.color { width: 80px; }
.combo.ltype { width: 84px; }
.combo.lweight { width: 65px; }
.combo.plot { width: 64px; padding-left: 5px; border: 1px solid #c4c4c4; background: #eee; color: #888; }
.combo.plot select { color: #888; opacity: 1; }
.combo.plot::after { border-top-color: #999; }
.flags { display: flex; align-items: center; margin-right: 2px; }
.flags svg { width: 9px; height: 9px; }
.swatch { width: 6px; height: 6px; border: 1px solid #333; background: #fff; }
.rule { width: 19px; height: 1px; background: #222; }
.rule.long { width: 32px; }

/* Work area */
.work { display: flex; flex: 1; min-height: 0; }
.tools { display: flex; flex-direction: column; align-items: center; width: 14px; flex: none; border-right: 1px solid #c2c2c2; }
.tools svg { width: 11px; height: 11px; }
.modify { margin-bottom: 10px; border-bottom: 1px solid #c2c2c2; }
.modify button { flex: 1; min-height: 0; }
.dims { align-self: flex-start; padding-bottom: 2px; border-bottom: 1px solid #c2c2c2; }
.dims button { height: 12px; }
.hgrip { width: 11px; height: 3px; margin: 1px 0 2px; border: solid #bcbcbc; border-width: 1px 0; background: #fff; }
.hgrip.mid { margin: 3px 0 2px; }
.hsep { width: 10px; height: 2px; border-bottom: 1px solid #bcbcbc; }
.mtext { font-size: 10px; font-weight: bold; }

.document { display: flex; flex-direction: column; flex: 1; min-width: 0; }
.doctabs { display: flex; height: 15px; flex: none; border-bottom: 3px solid #8d8d8d; }
.doctabs button { gap: 2px; height: 12px; padding: 0 1px; background: #cfcfcf; border-right: 1px solid #aaa; color: #1a1a96; font-family: Roboto, sans-serif; font-weight: 500; }
.doctabs svg { width: 9px; height: 9px; }

.canvas { width: 100%; flex: 1; min-height: 0; background: #000; overflow: hidden; fill: none; shape-rendering: crispEdges; }
.limit { stroke: #4a0c0c; }
.frame { stroke: #008400; }
.dim { stroke: #858500; }
.ends { stroke: #d4d400; stroke-width: 2; }
.soft { stroke: #bdbd00; shape-rendering: auto; }
.part { stroke: #9a9a9a; }
.thick { stroke-width: 2; }
.dark { stroke: #666; }
.hidden { stroke: #8f8f00; stroke-dasharray: 4 2; }
.holes { stroke: #aaa; shape-rendering: auto; }
.value { fill: #eaea00; font-size: 4px; font-weight: bold; text-anchor: middle; }
.qty { fill: #a80000; font-family: Lato, sans-serif; font-size: 28px; font-weight: 300; }
.cross-v { stroke: #4a4a4a; stroke-width: 2; }
.cross-h { stroke: #929292; }
.ucs { stroke: #a5a5a5; }
.ucs .tip { fill: #333; shape-rendering: auto; }
.ucs text { fill: #aaa; stroke: none; font-family: Lato, sans-serif; font-size: 15px; font-weight: 300; }

.layouts { display: flex; height: 9px; flex: none; padding-left: 1px; background: #f0f0f0; }
.step { width: 8px; border: 1px solid #bbb; }
.step svg { width: 6px; height: 6px; }
.sheet { padding: 0 3px 0 4px; background: linear-gradient(110deg, transparent 0 calc(100% - 3px), #555 calc(100% - 3px) calc(100% - 2px), transparent calc(100% - 2px)); }
.sheet.current { padding: 0 5px; background: #000; color: #fff; clip-path: polygon(0 0, 100% 0, calc(100% - 3px) 100%, 3px 100%); }

/* Command window */
.command { display: flex; flex: none; margin-top: 1px; padding: 5px 3px 0; gap: 2px; border-top: 2px solid #a3a3a3; border-bottom: 1px solid #b5b5b5; }
.vgrip { width: 4px; border: solid #bdbdbd; border-width: 0 1px; background: #fff; }
.console { flex: 1; min-width: 0; border: 1px solid #9c9c9c; background: #fff; font: 8px/9px "Liberation Mono", "Noto Sans CJK KR", monospace; }
.history { display: flex; border-bottom: 1px solid #999; }
.lines { flex: 1; }
.lines p { height: 9px; white-space: pre; }
.vscroll { display: flex; flex-direction: column; justify-content: space-between; width: 9px; background: #f0f0f0; }
.vscroll svg, .hscroll svg { width: 8px; height: 8px; }
.prompt { display: flex; align-items: center; height: 11px; }
.prompt input { flex: 1; min-width: 0; padding: 0 4px; border: 0; outline: 0; background: none; }
.hscroll { display: flex; justify-content: space-between; align-items: center; width: 46px; padding: 0 10px 0 1px; background: #f0f0f0; }
.thumb { width: 9px; height: 8px; border: 1px solid #aaa; border-radius: 1px; background: #e2e2e2; margin-right: 8px; }

/* Status bar */
.status { display: flex; align-items: center; flex: none; height: 12px; padding: 0 2px; background: linear-gradient(90deg, #ececec, #f2efee); font-family: "Liberation Sans Narrow", Roboto, "Noto Sans CJK KR", sans-serif; }
.coords { width: 105px; padding: 0 1px; border: 1px solid #b5b5b5; line-height: 9px; white-space: nowrap; }
.toggles { display: flex; margin-left: 2px; }
.toggles button { height: 11px; padding: 0 1px; border: 1px solid transparent; border-right-color: #ccc; }
.toggles .on { border-color: #777 #fff #fff #777; }
.tray { display: flex; align-items: center; gap: 1px; margin-left: auto; }
.tray button { height: 11px; min-width: 11px; }
.tray svg { width: 10px; height: 10px; }
.tray .on { border: solid #aaa; border-width: 1px 0 0 1px; }
.anno { gap: 3px; margin-right: 3px; }
```
